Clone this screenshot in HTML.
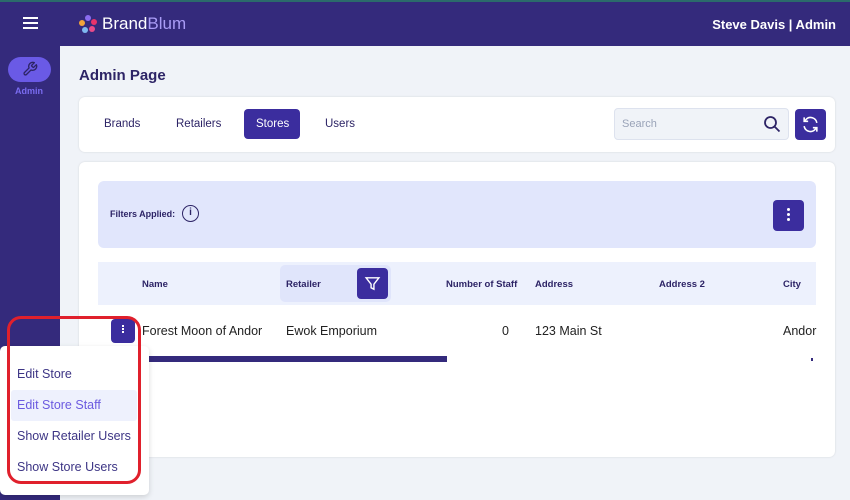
<!DOCTYPE html>
<html><head><style>
*{box-sizing:border-box;margin:0;padding:0}
body{width:850px;height:500px;overflow:hidden;background:#f0f3f8;font-family:"Liberation Sans",Arial,sans-serif;position:relative}
.a{position:absolute}
.hdr{left:0;top:0;width:850px;height:46px;background:#342a7c;border-top:2px solid #2b6b6b}
.side{left:0;top:46px;width:60px;height:454px;background:#342a7c}
.card{background:#fff;border-radius:6px;box-shadow:0 0 2px rgba(0,0,0,.12)}
.btn{background:#3b2d9e;border-radius:4px}
.th{font-size:9.5px;font-weight:bold;color:#2d2466}
.td{font-size:12.5px;color:#222}
.mi{left:17px;font-size:12.5px;color:#3d3585}
.tab{font-size:11.5px}
</style></head><body>
<div class="a hdr"></div>
<div class="a" style="left:23px;top:17px;width:15px;height:2px;background:#fff;box-shadow:0 5px 0 #fff,0 10px 0 #fff"></div>
<svg class="a" style="left:78px;top:14px" width="20" height="20" viewBox="0 0 20 20">
<circle cx="10" cy="4" r="3" fill="#8a6cf0"/><circle cx="16" cy="8" r="3" fill="#e8336b"/><circle cx="14" cy="15" r="3" fill="#e84b8a"/><circle cx="7" cy="16" r="3" fill="#7fb8f0"/><circle cx="4" cy="9" r="3" fill="#f2a33a"/></svg>
<div class="a" style="left:102px;top:14px;font-size:17px;color:#fff">Brand<span style="color:#a99cf5">Blum</span></div>
<div class="a" style="right:14px;top:17px;font-size:13px;font-weight:bold;color:#fff">Steve Davis | Admin</div>
<div class="a side"></div>
<div class="a" style="left:8px;top:57px;width:43px;height:25px;border-radius:13px;background:#6a5ae6"></div>
<svg class="a" style="left:22px;top:61px" width="16" height="16" viewBox="0 0 24 24" fill="none" stroke="#2d2466" stroke-width="2" stroke-linejoin="round"><path d="M14.7 6.3a1 1 0 0 0 0 1.4l1.6 1.6a1 1 0 0 0 1.4 0l3.8-3.8a6 6 0 0 1-7.9 7.9l-6.9 6.9a2.1 2.1 0 0 1-3-3l6.9-6.9a6 6 0 0 1 7.9-7.9z"/></svg>
<div class="a" style="left:15px;top:86px;font-size:9px;font-weight:bold;color:#7a6cf0">Admin</div>
<div class="a" style="left:79px;top:67px;font-size:15px;font-weight:bold;color:#2d2466">Admin Page</div>
<div class="a card" style="left:79px;top:97px;width:756px;height:55px"></div>
<div class="a tab" style="left:104px;top:118px;color:#2d2466">Brands</div>
<div class="a tab" style="left:176px;top:118px;color:#2d2466">Retailers</div>
<div class="a btn" style="left:244px;top:109px;width:56px;height:30px"></div>
<div class="a tab" style="left:256px;top:118px;color:#fff">Stores</div>
<div class="a tab" style="left:325px;top:118px;color:#2d2466">Users</div>
<div class="a" style="left:614px;top:108px;width:175px;height:32px;background:#f0f3f8;border:1px solid #dde2ee;border-radius:4px"></div>
<div class="a" style="left:622px;top:118px;font-size:11px;color:#9aa3b8">Search</div>
<svg class="a" style="left:763px;top:115px" width="18" height="18" viewBox="0 0 18 18" fill="none" stroke="#2d2466" stroke-width="1.8"><circle cx="7.5" cy="7.5" r="5.5"/><path d="M11.5 11.5l5 5"/></svg>
<div class="a btn" style="left:795px;top:109px;width:31px;height:31px"></div>
<svg class="a" style="left:801px;top:115px" width="19" height="19" viewBox="0 0 24 24" fill="none" stroke="#fff" stroke-width="2"><path d="M20 10a8 8 0 0 0-14-4L4 8M4 14a8 8 0 0 0 14 4l2-2"/><path d="M4 3v5h5M20 21v-5h-5"/></svg>
<div class="a card" style="left:79px;top:162px;width:756px;height:295px"></div>
<div class="a" style="left:98px;top:181px;width:718px;height:67px;background:#e1e6fc;border-radius:6px"></div>
<div class="a" style="left:110px;top:209px;font-size:9px;font-weight:bold;color:#2d2466">Filters Applied:</div>
<div class="a" style="left:182px;top:205px;width:17px;height:17px;border:1.5px solid #2d2466;border-radius:50%;font-size:10px;font-weight:bold;text-align:center;line-height:14px;color:#2d2466">i</div>
<div class="a btn" style="left:773px;top:200px;width:31px;height:31px"></div>
<div class="a" style="left:787px;top:208px;width:3px;height:3px;background:#fff;border-radius:50%;box-shadow:0 5px 0 #fff,0 10px 0 #fff"></div>
<div class="a" style="left:98px;top:262px;width:718px;height:43px;background:#edf1fd"></div>
<div class="a" style="left:280px;top:265px;width:111px;height:37px;background:#e0e5fb;border-radius:5px"></div>
<div class="a th" style="left:142px;top:279px">Name</div>
<div class="a th" style="left:286px;top:279px">Retailer</div>
<div class="a btn" style="left:357px;top:268px;width:31px;height:31px"></div>
<svg class="a" style="left:364px;top:275px" width="17" height="17" viewBox="0 0 24 24" fill="none" stroke="#fff" stroke-width="2"><path d="M3 4h18l-7 9v7l-4-2v-5z"/></svg>
<div class="a th" style="left:446px;top:279px">Number of Staff</div>
<div class="a th" style="left:535px;top:279px">Address</div>
<div class="a th" style="left:659px;top:279px">Address 2</div>
<div class="a th" style="left:783px;top:279px">City</div>
<div class="a btn" style="left:111px;top:319px;width:24px;height:24px"></div>
<div class="a" style="left:122px;top:325px;width:2px;height:2px;background:#fff;box-shadow:0 3px 0 #fff,0 6px 0 #fff"></div>
<div class="a td" style="left:142px;top:324px">Forest Moon of Andor</div>
<div class="a td" style="left:286px;top:324px">Ewok Emporium</div>
<div class="a td" style="left:502px;top:324px">0</div>
<div class="a td" style="left:535px;top:324px">123 Main St</div>
<div class="a td" style="left:783px;top:324px">Andor</div>
<div class="a" style="left:147px;top:356px;width:300px;height:6px;background:#342a7c"></div>
<div class="a" style="left:811px;top:358px;width:2px;height:3px;background:#342a7c"></div>
<div class="a" style="left:0;top:346px;width:149px;height:149px;background:#fff;border-radius:5px;box-shadow:0 2px 6px rgba(0,0,0,.15)"></div>
<div class="a" style="left:11px;top:390px;width:126px;height:31px;background:#eef1fd;border-radius:3px"></div>
<div class="a mi" style="top:367px">Edit Store</div>
<div class="a mi" style="top:398px;color:#6b5ae0">Edit Store Staff</div>
<div class="a mi" style="top:429px">Show Retailer Users</div>
<div class="a mi" style="top:460px">Show Store Users</div>
<div class="a" style="left:7px;top:316px;width:134px;height:168px;border:3px solid #e0202c;border-radius:14px"></div>
</body></html>
